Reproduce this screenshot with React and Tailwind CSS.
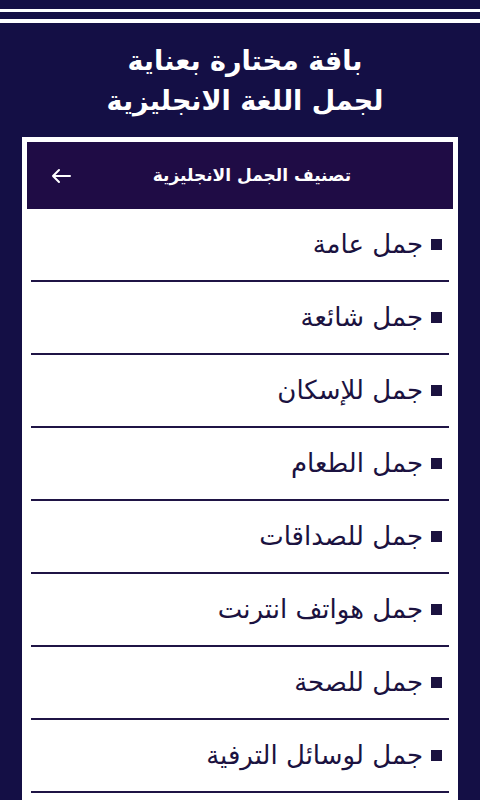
import React from 'react';

const categories = [
  'جمل عامة',
  'جمل شائعة',
  'جمل للإسكان',
  'جمل الطعام',
  'جمل للصداقات',
  'جمل هواتف انترنت',
  'جمل للصحة',
  'جمل لوسائل الترفية',
];

const App = () => {
  return (
    <div
      className="w-[480px] h-[800px] overflow-hidden bg-[#140f45] flex flex-col"
      style={{ fontFamily: '"DejaVu Sans", "Noto Sans", sans-serif' }}
    >
      {/* top stripes */}
      <div className="h-[9px] shrink-0" />
      <div className="h-[3px] bg-white shrink-0" />
      <div className="h-[7px] shrink-0" />
      <div className="h-[4px] bg-white shrink-0" />

      <div dir="rtl" className="flex flex-col items-center pt-[18px] pl-[10px] text-white font-bold text-[27px] leading-[40px]">
        <div>باقة مختارة بعناية</div>
        <div>لجمل اللغة الانجليزية</div>
      </div>

      <div className="mx-[22px] mt-[16px] flex-1 bg-white p-[5px] pb-0 flex flex-col">
        <div className="h-[67px] shrink-0 bg-[#1f0c45] flex items-center text-white">
          <div className="w-[44px] flex justify-end">
            <svg width="20" height="16" viewBox="0 0 20 16" fill="none" stroke="white" strokeWidth="2" strokeLinecap="round" strokeLinejoin="round">
              <path d="M19 8H2M8 2L2 8l6 6" />
            </svg>
          </div>
          <div dir="rtl" className="flex-1 text-center pr-[20px] text-[17px] font-bold">
            تصنيف الجمل الانجليزية
          </div>
        </div>

        <div className="flex flex-col px-[4px]">
          {categories.map((name) => (
            <div key={name} className="h-[73px] shrink-0 flex flex-col">
              <div dir="rtl" className="flex-1 flex items-center gap-[8px] pr-[7px] text-[#1b1240] text-[26px]">
                <span className="w-[11px] h-[11px] bg-[#1b1240] shrink-0" />
                <span>{name}</span>
              </div>
              <div className="h-[2px] bg-[#1f1445]" />
            </div>
          ))}
        </div>
      </div>
    </div>
  );
};

export default App;
